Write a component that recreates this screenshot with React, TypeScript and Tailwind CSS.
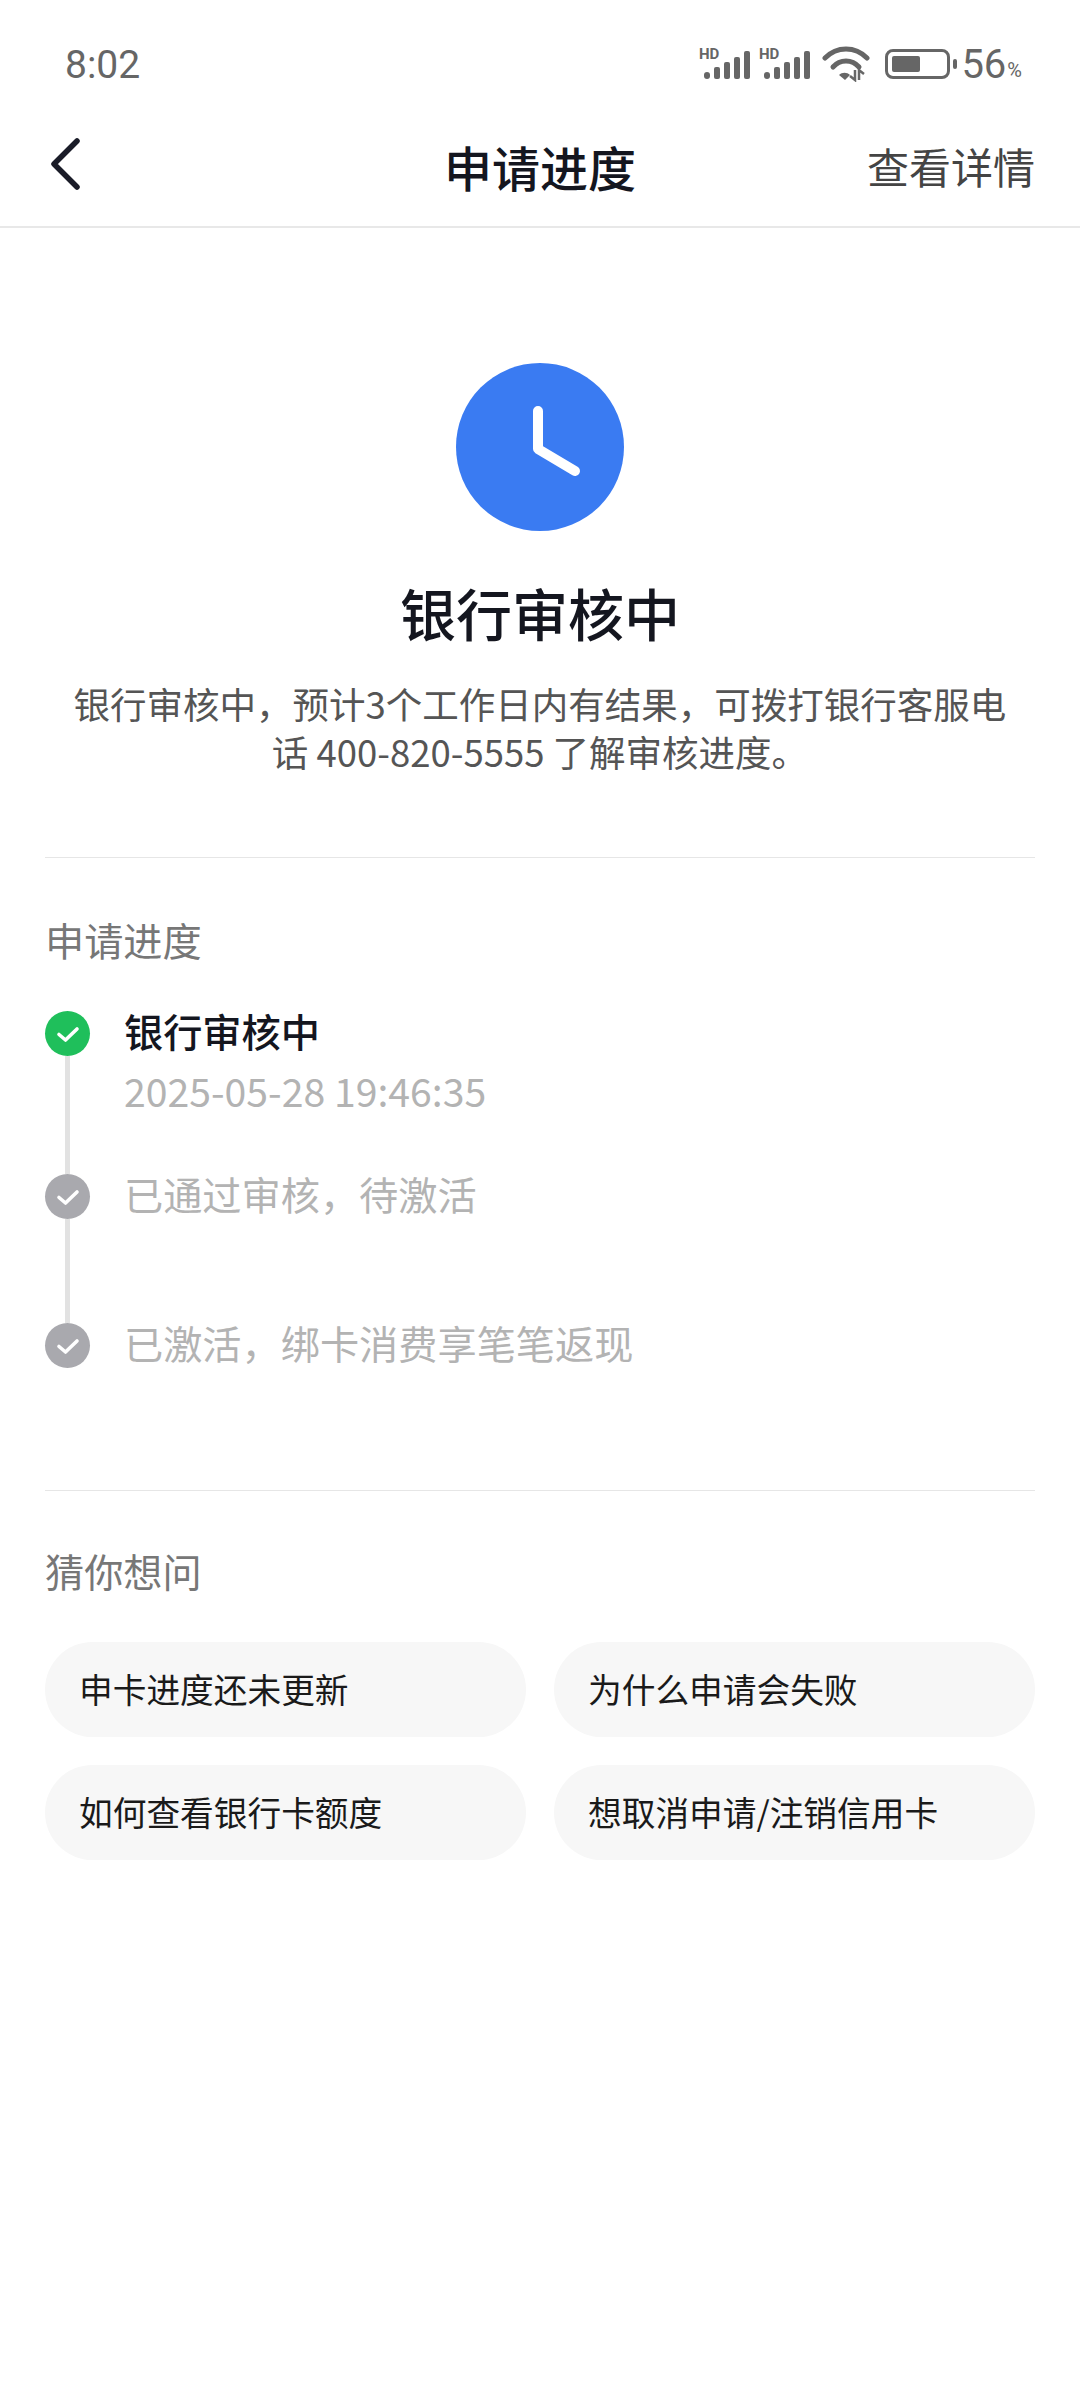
const cjk = { fontFamily: '"Noto Sans CJK SC", "Noto Sans", sans-serif' }

const Signal = () => (
  <svg width="54" height="40" viewBox="0 -4 54 40" className="block">
    <text x="0" y="12" fontFamily="Roboto, sans-serif" fontWeight="700" fontSize="15" fill="#666">HD</text>
    <rect x="5" y="25" width="6" height="7" rx="3" fill="#666" />
    <rect x="15" y="20" width="6" height="12" rx="2" fill="#666" />
    <rect x="25" y="15" width="6" height="17" rx="2" fill="#666" />
    <rect x="35" y="10" width="6" height="22" rx="2" fill="#666" />
    <rect x="45" y="4" width="6" height="28" rx="2" fill="#666" />
  </svg>
)

const Wifi = () => (
  <svg width="48" height="36" viewBox="0 0 48 36" className="block" fill="none">
    <path d="M3 12 C15 0 33 0 45 12" stroke="#666" strokeWidth="5" strokeLinecap="round" />
    <path d="M11 21 C18 13 30 13 37 21" stroke="#666" strokeWidth="5" strokeLinecap="round" />
    <path d="M17 29 C20 26 25 26 28 29 L23 34 Z" fill="#666" />
    <path d="M33 24 v10 l-5 -4 M37 34 v-10 l5 4" stroke="#666" strokeWidth="2.5" />
  </svg>
)

const Battery = () => (
  <div className="flex items-center gap-[3px]">
    <div className="w-[65px] h-[30px] rounded-[8px] border-[3px] border-[#666] p-[4px] box-border">
      <div className="w-[28px] h-full rounded-[2px] bg-[#666]" />
    </div>
    <div className="w-[4px] h-[10px] rounded-[2px] bg-[#666]" />
  </div>
)

const Check = ({ tone }: { tone: string }) => (
  <div className={`w-[45px] h-[45px] rounded-full flex items-center justify-center shrink-0 ${tone}`}>
    <svg width="26" height="26" viewBox="0 0 26 26" fill="none">
      <path d="M4 13.5 L10.5 19 L22 8" stroke="#fff" strokeWidth="3.6" strokeLinecap="round" strokeLinejoin="round" />
    </svg>
  </div>
)

const Rail = ({ h }: { h: string }) => <div className={`w-[5px] bg-[#e2e2e2] ${h}`} />

const questions = ['申卡进度还未更新', '为什么申请会失败', '如何查看银行卡额度', '想取消申请/注销信用卡']

export default function App() {
  return (
    <div className="w-[1080px] h-[2400px] bg-white overflow-hidden" style={cjk}>
      {/* status bar */}
      <div className="h-[128px] pl-[65px] pr-[58px] flex items-center justify-between text-[#666]">
        <span className="mt-[2px] text-[39px] leading-none font-[Roboto]">8:02</span>
        <div className="flex items-center">
          <div className="mb-[2px] flex items-center gap-[6px]"><Signal /><Signal /></div>
          <div className="ml-[9px]"><Wifi /></div>
          <div className="ml-[15px]"><Battery /></div>
          <span className="ml-[4px] mt-[2px] text-[40px] leading-none font-[Roboto]">56</span>
          <span className="ml-[1px] mt-[12px] text-[20px] leading-none font-[Roboto]">%</span>
        </div>
      </div>

      {/* nav */}
      <div className="relative h-[100px] pb-[22px] border-b-2 border-[#e8e8e8] px-[45px] flex items-center justify-between">
        <svg width="40" height="56" viewBox="0 0 40 56" fill="none" className="mb-[4px]">
          <path d="M32 5 L9 28 L32 51" stroke="#1a1c28" strokeWidth="5.5" strokeLinecap="round" strokeLinejoin="round" />
        </svg>
        <span className="absolute left-0 right-0 text-center text-[48px] leading-none font-medium text-[#14161f]">申请进度</span>
        <span className="text-[42px] leading-none text-[#444]">查看详情</span>
      </div>

      {/* status summary */}
      <div className="mx-[45px] pt-[135px] pb-[81px] border-b border-[#e6e6e6] flex flex-col items-center">
        <div className="w-[168px] h-[168px] rounded-full bg-[#3a7bf2] flex items-center justify-center">
          <svg width="168" height="168" viewBox="0 0 168 168" fill="none">
            <path d="M82 48 L82 86 L119 108" stroke="#fff" strokeWidth="10" strokeLinecap="round" strokeLinejoin="round" />
          </svg>
        </div>
        <h1 className="mt-[45px] text-[56px] leading-[72px] font-medium text-[#14161f]">银行审核中</h1>
        <p className="mt-[32px] w-[950px] text-center text-[36.5px] leading-[48px] text-[#555]">
          {'银行审核中\uFF0C预计3个工作日内有结果\uFF0C可拨打银行客服电话 400-820-5555 了解审核进度。'}
        </p>
      </div>

      {/* progress */}
      <div className="mx-[45px] pt-[53px] pb-[122px] border-b border-[#e6e6e6]">
        <div className="text-[39.2px] leading-[56px] text-[#777]">申请进度</div>
        <div className="mt-[44px] flex gap-[34px]">
          <div className="flex flex-col items-center w-[45px]">
            <Check tone="bg-[#1fbf5b]" />
            <Rail h="h-[118px]" />
            <Check tone="bg-[#a9a9ae]" />
            <Rail h="h-[104px]" />
            <Check tone="bg-[#a9a9ae]" />
          </div>
          <div className="flex flex-col -mt-[3px] text-[39.2px]">
            <div className="h-[45px] flex items-center font-medium text-[#14161f]">银行审核中</div>
            <div className="mt-[12px] h-[50px] flex items-center text-[#b3b3b3]">2025-05-28 19:46:35</div>
            <div className="mt-[56px] h-[45px] flex items-center text-[#b3b3b3]">{'已通过审核\uFF0C待激活'}</div>
            <div className="mt-[104px] h-[45px] flex items-center text-[#b3b3b3]">{'已激活\uFF0C绑卡消费享笔笔返现'}</div>
          </div>
        </div>
      </div>

      {/* faq */}
      <div className="mx-[45px] pt-[51px]">
        <div className="text-[39.2px] leading-[56px] text-[#777]">猜你想问</div>
        <div className="mt-[44px] grid grid-cols-2 gap-x-[28px] gap-y-[28px]">
          {questions.map((q) => (
            <div key={q} className="h-[95px] rounded-full bg-[#f7f7f7] pl-[34px] flex items-center text-[33.7px] text-[#1a1a1a]">{q}</div>
          ))}
        </div>
      </div>
    </div>
  )
}
